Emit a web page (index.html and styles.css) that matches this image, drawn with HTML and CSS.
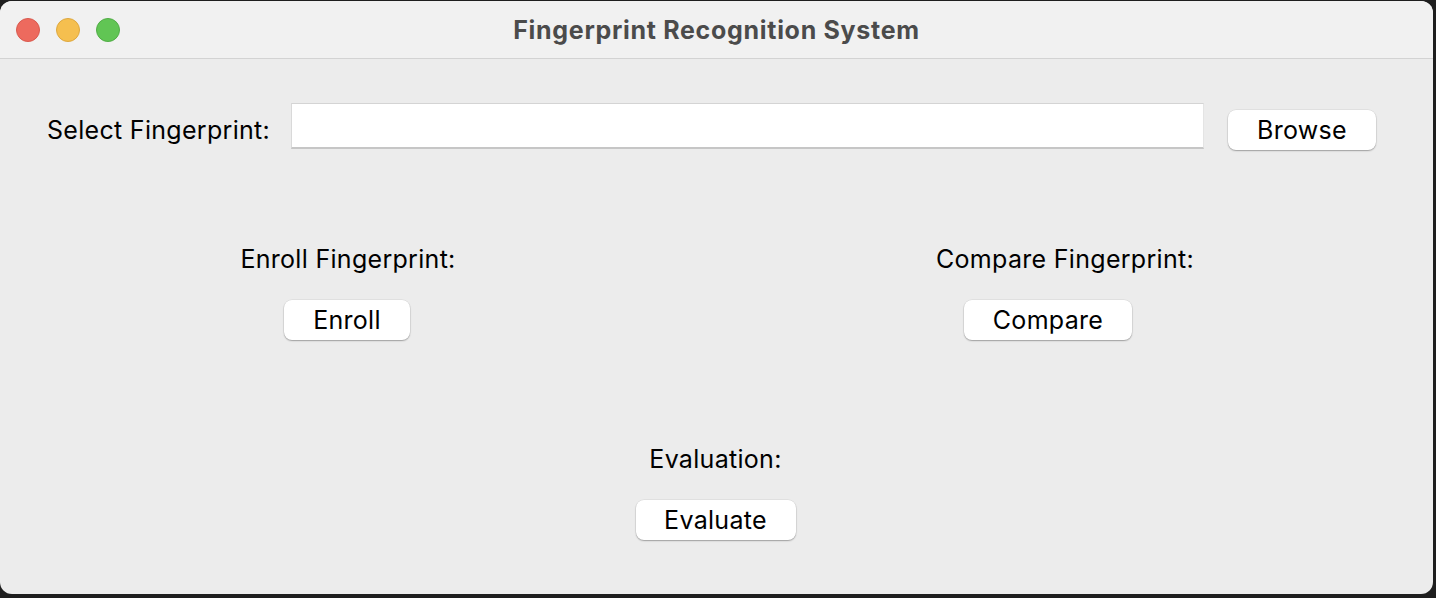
FILE: index.html
```html
<!DOCTYPE html>
<html>
<head>
<meta charset="utf-8">
<title>Fingerprint Recognition System</title>
<link rel="stylesheet" href="styles.css">
</head>
<body>
<div class="window">
  <div class="titlebar">
    <div class="lights">
      <span class="light red"></span>
      <span class="light yellow"></span>
      <span class="light green"></span>
    </div>
    <div class="title">Fingerprint Recognition System</div>
  </div>
  <div class="content">
    <div class="row-select">
      <label class="label select-label">Select Fingerprint:</label>
      <div class="entry"></div>
      <button class="btn browse">Browse</button>
    </div>
    <div class="row-actions">
      <div class="cell enroll-cell">
        <div class="label">Enroll Fingerprint:</div>
        <button class="btn enroll">Enroll</button>
      </div>
      <div class="cell compare-cell">
        <div class="label">Compare Fingerprint:</div>
        <button class="btn compare">Compare</button>
      </div>
    </div>
    <div class="row-eval">
      <div class="cell eval-cell">
        <div class="label">Evaluation:</div>
        <button class="btn evaluate">Evaluate</button>
      </div>
    </div>
  </div>
</div>
</body>
</html>
```
FILE: styles.css
```css
html, body {
  margin: 0;
  padding: 0;
  background: #1e1e1e;
  width: 1436px;
  height: 598px;
  overflow: hidden;
}
body {
  padding-top: 1px;
  box-sizing: border-box;
  font-family: Inter, "Noto Sans", "Liberation Sans", sans-serif;
}
.window {
  width: 1433px;
  height: 593px;
  border-radius: 12px;
  overflow: hidden;
  background: #ececec;
  display: flex;
  flex-direction: column;
}
.titlebar {
  height: 57px;
  flex: none;
  background: #f1f1f1;
  border-bottom: 1px solid #d3d3d3;
  position: relative;
  display: flex;
  align-items: center;
  justify-content: center;
}
.lights {
  position: absolute;
  left: 16px;
  top: 17px;
  display: flex;
  gap: 16px;
}
.light {
  width: 24px;
  height: 24px;
  border-radius: 50%;
  box-sizing: border-box;
}
.red { background: #ed6a5e; border: 1px solid #d95a4f; }
.yellow { background: #f5bf4f; border: 1px solid #dea83f; }
.green { background: #61c554; border: 1px solid #51ad46; }
.title {
  font-weight: 700;
  font-size: 25px;
  letter-spacing: 0.7px;
  color: #4b4b4b;
}
.content {
  flex: 1;
  padding: 44px 0 0 0;
}
.label {
  font-size: 25px;
  letter-spacing: 0.3px;
  line-height: 28px;
  color: #000;
}
.row-select {
  display: flex;
  align-items: flex-start;
  padding-left: 47px;
  height: 47px;
}
.select-label {
  width: 244px;
  margin-top: 13px;
}
.entry {
  width: 913px;
  height: 46px;
  box-sizing: border-box;
  background: #fff;
  border-top: 1px solid #d4d4d4;
  border-left: 1px solid #d9d9d9;
  border-right: 1px solid #e4e4e4;
  border-bottom: 2px solid #c6c6c6;
}
.btn {
  font-family: inherit;
  font-size: 25px;
  letter-spacing: 0.3px;
  color: #000;
  background: #fff;
  border: none;
  border-radius: 8px;
  height: 40px;
  padding: 0 0 1px 0;
  box-shadow: 0 1px 1.5px rgba(0,0,0,0.3), 0 0 0 0.5px rgba(0,0,0,0.08);
  line-height: 38px;
}
.browse {
  width: 148px;
  margin-left: 24px;
  margin-top: 7px;
}
.row-actions {
  display: flex;
  margin-top: 95px;
}
.cell {
  display: flex;
  flex-direction: column;
  align-items: center;
  gap: 27px;
}
.enroll-cell {
  width: 400px;
  margin-left: 148px;
}
.compare-cell {
  width: 400px;
  margin-left: 317px;
}
.enroll { width: 126px; margin-right: 2px; }
.compare { width: 168px; margin-right: 34px; }
.row-eval {
  display: flex;
  justify-content: center;
  margin-top: 105px;
}
.eval-cell { margin-left: -2px; }
.evaluate { width: 160px; }
```
